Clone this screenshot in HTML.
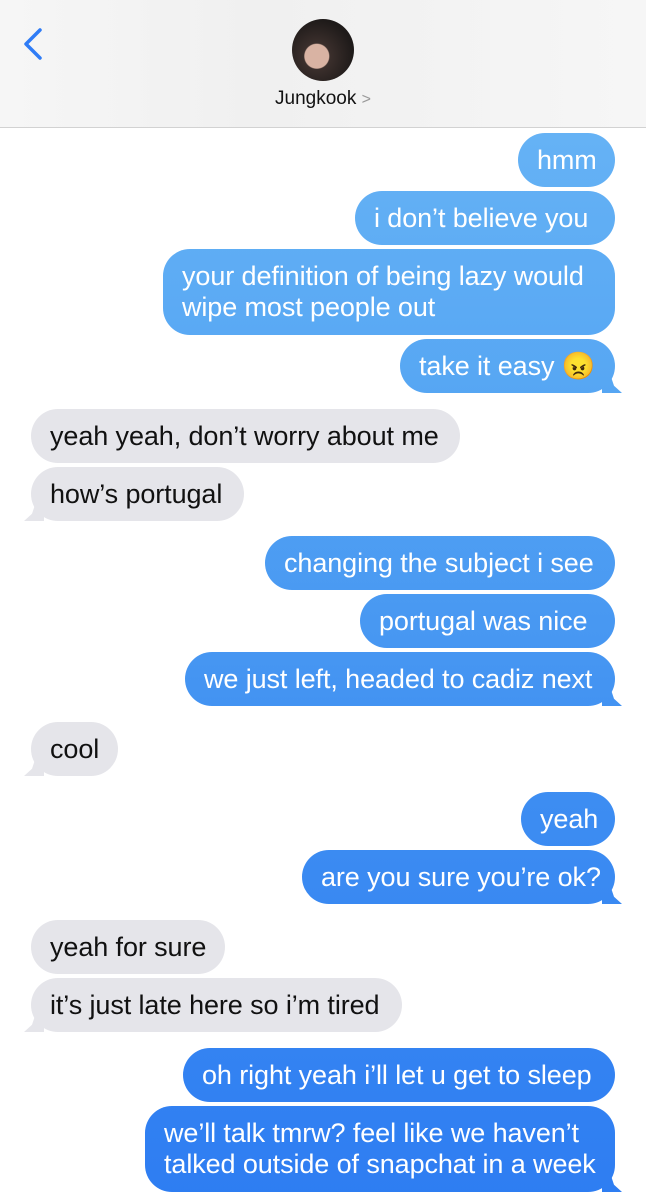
<!DOCTYPE html>
<html><head><meta charset="utf-8"><style>
html,body{margin:0;padding:0;width:646px;height:1200px;overflow:hidden;background:#fff;font-family:"Liberation Sans",Arial,sans-serif}
.hdr{position:absolute;left:0;top:0;width:646px;height:127px;background:linear-gradient(90deg,#f6f6f6,#f0f0f0 40%,#f6f6f6);border-bottom:1px solid #d2d2d2}
.back{position:absolute;left:20px;top:26px}
.av{position:absolute;left:292px;top:19px;width:62px;height:62px;border-radius:50%;background:radial-gradient(circle at 40% 60%,#d9b3a3 0 12px,#3b2f2c 13px,#1e1a19 70%);overflow:hidden}
.name{position:absolute;left:0;width:646px;top:88px;text-align:center;font-size:19px;color:#111}
.name span{color:#999;font-size:16px}
.b{position:absolute;border-radius:27px;font-size:27px;line-height:31px;box-sizing:border-box;padding:12px 0 0 19px;white-space:nowrap;letter-spacing:-0.1px}
.r{color:#fff;background:linear-gradient(180deg,#6db8f6 0px,#56a6f3 400px,#3d8df2 800px,#2e7df2 1200px);background-attachment:fixed}
.l{color:#111;background:#e5e5ea}
.tr::after{content:"";position:absolute;right:-7px;bottom:0;width:20px;height:18px;background:inherit;background-attachment:fixed;clip-path:polygon(0 0,45% 10%,60% 60%,100% 100%,0 100%)}
.tl::after{content:"";position:absolute;left:-7px;bottom:0;width:20px;height:18px;background:#e5e5ea;clip-path:polygon(100% 0,55% 10%,40% 60%,0 100%,100% 100%)}
</style></head><body>
<div class="hdr">
<svg class="back" width="26" height="36" viewBox="0 0 26 36"><path d="M20 4 L6 18 L20 32" fill="none" stroke="#2f7cf6" stroke-width="3.5" stroke-linecap="round" stroke-linejoin="round"/></svg>
<div class="av"></div>
<div class="name">Jungkook <span>&gt;</span></div>
</div>
<div class="b r" style="left:518px;top:133px;width:97px;height:54px">hmm</div>
<div class="b r" style="left:355px;top:191px;width:260px;height:54px">i don’t believe you</div>
<div class="b r" style="left:163px;top:249px;width:452px;height:86px">your definition of being lazy would<br>wipe most people out</div>
<div class="b r tr" style="left:400px;top:339px;width:215px;height:54px">take it easy 😠</div>
<div class="b l" style="left:31px;top:409px;width:429px;height:54px">yeah yeah, don’t worry about me</div>
<div class="b l tl" style="left:31px;top:467px;width:213px;height:54px">how’s portugal</div>
<div class="b r" style="left:265px;top:536px;width:350px;height:54px">changing the subject i see</div>
<div class="b r" style="left:360px;top:594px;width:255px;height:54px">portugal was nice</div>
<div class="b r tr" style="left:185px;top:652px;width:430px;height:54px">we just left, headed to cadiz next</div>
<div class="b l tl" style="left:31px;top:722px;width:87px;height:54px">cool</div>
<div class="b r" style="left:521px;top:792px;width:94px;height:54px">yeah</div>
<div class="b r tr" style="left:302px;top:850px;width:313px;height:54px">are you sure you’re ok?</div>
<div class="b l" style="left:31px;top:920px;width:194px;height:54px">yeah for sure</div>
<div class="b l tl" style="left:31px;top:978px;width:371px;height:54px">it’s just late here so i’m tired</div>
<div class="b r" style="left:183px;top:1048px;width:432px;height:54px">oh right yeah i’ll let u get to sleep</div>
<div class="b r tr" style="left:145px;top:1106px;width:470px;height:86px">we’ll talk tmrw? feel like we haven’t<br>talked outside of snapchat in a week</div>
</body></html>
